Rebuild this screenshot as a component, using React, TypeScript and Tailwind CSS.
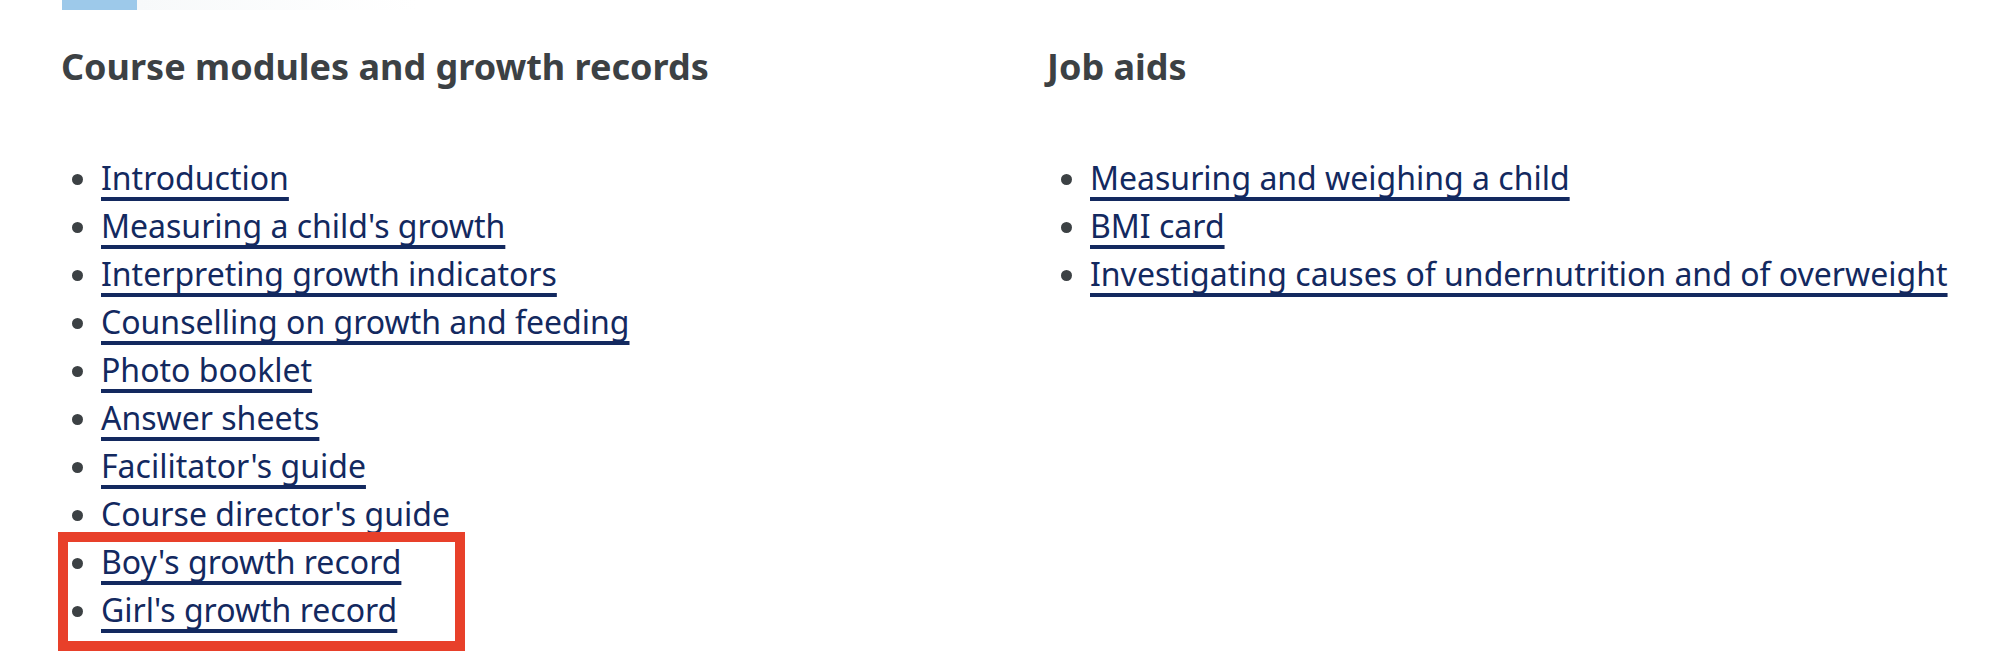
const courseLinks = [
  { label: "Introduction", link: true },
  { label: "Measuring a child's growth", link: true },
  { label: "Interpreting growth indicators", link: true },
  { label: "Counselling on growth and feeding", link: true },
  { label: "Photo booklet", link: true },
  { label: "Answer sheets", link: true },
  { label: "Facilitator's guide", link: true },
  { label: "Course director's guide", link: false },
  { label: "Boy's growth record", link: true },
  { label: "Girl's growth record", link: true },
];

const jobAids = [
  "Measuring and weighing a child",
  "BMI card",
  "Investigating causes of undernutrition and of overweight",
];

const linkClass =
  "text-[#13295f] underline decoration-[4px] underline-offset-[7px] [text-decoration-skip-ink:none]";

const App = () => {
  return (
    <div
      className="relative w-[2008px] h-[670px] overflow-hidden bg-white"
      style={{ fontFamily: '"Noto Sans", "Open Sans", sans-serif' }}
    >
      {/* bottom edge of the banner picture above */}
      <div className="flex h-[10px] pl-[62px]">
        <div className="w-[75px] h-full bg-[#9dc9ea]" />
        <div className="w-[280px] h-full bg-gradient-to-r from-[#f7f9fa] to-white" />
      </div>

      <div className="grid grid-cols-[986px_1fr] pl-[61px] pr-[20px] pt-[33px]">
        <div>
          <h2 className="text-[36px] leading-[48px] font-bold text-[#3c4144]">
            Course modules and growth records
          </h2>
          <ul className="relative mt-[63px] list-disc pl-[40px] text-[32px] leading-[48px] text-[#3c4144]">
            {courseLinks.map((item) => (
              <li key={item.label}>
                {item.link ? (
                  <a href="#" className={linkClass}>
                    {item.label}
                  </a>
                ) : (
                  <span className="text-[#13295f]">{item.label}</span>
                )}
              </li>
            ))}
            {/* annotation box */}
            <div className="absolute left-[-3px] top-[378px] w-[407px] h-[119px] border-[10px] border-[#e8402a]" />
          </ul>
        </div>

        <div>
          <h2 className="text-[36px] leading-[48px] font-bold text-[#3c4144]">
            Job aids
          </h2>
          <ul className="mt-[63px] list-disc pl-[43px] text-[32px] leading-[48px] text-[#3c4144]">
            {jobAids.map((label) => (
              <li key={label}>
                <a href="#" className={linkClass}>
                  {label}
                </a>
              </li>
            ))}
          </ul>
        </div>
      </div>
    </div>
  );
};

export default App;
